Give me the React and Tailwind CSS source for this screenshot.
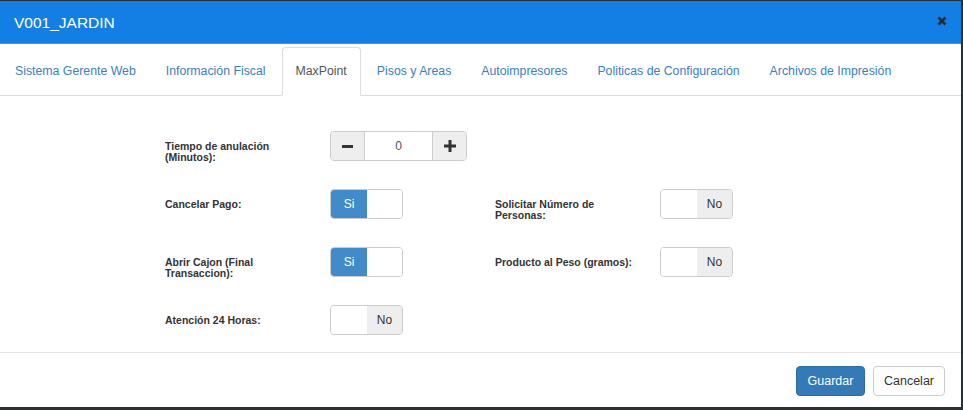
import React from 'react';

const tabs = [
    'Sistema Gerente Web',
    'Información Fiscal',
    'MaxPoint',
    'Pisos y Areas',
    'Autoimpresores',
    'Politicas de Configuración',
    'Archivos de Impresión',
];

const Toggle = ({ on }) => (
    <div className="w-[73px] h-[30px] rounded-[4px] border border-[#ccc] overflow-hidden flex text-[12px]">
        {on ? (
            <>
                <div className="w-[36px] bg-[#428bca] text-white flex items-center justify-center">Si</div>
                <div className="flex-1 bg-white" />
            </>
        ) : (
            <>
                <div className="w-[36px] bg-white" />
                <div className="flex-1 bg-[#eee] text-[#333] flex items-center justify-center">No</div>
            </>
        )}
    </div>
);

const Field = ({ label, children }) => (
    <div className="flex items-start">
        <div className="w-[165px] pt-[10px]">
            <p className="w-[140px] text-[10.5px] leading-[11px] font-bold text-[#333]">{label}</p>
        </div>
        {children}
    </div>
);

const Spinner = () => (
    <div className="w-[137px] h-[30px] rounded-[4px] border border-[#ccc] overflow-hidden flex">
        <div className="w-[34px] bg-[#eee] border-r border-[#ccc] flex items-center justify-center">
            <svg width="11" height="11" viewBox="0 0 11 11">
                <rect x="0" y="4" width="11" height="3" fill="#333" />
            </svg>
        </div>
        <div className="flex-1 bg-white flex items-center justify-center text-[12px] text-[#555]">0</div>
        <div className="w-[34px] bg-[#eee] border-l border-[#ccc] flex items-center justify-center">
            <svg width="12" height="12" viewBox="0 0 12 12">
                <rect x="0" y="4.5" width="12" height="3" fill="#333" />
                <rect x="4.5" y="0" width="3" height="12" fill="#333" />
            </svg>
        </div>
    </div>
);

const App = () => {
    return (
        <div className="w-[963px] h-[410px] bg-[#2b3035] pt-[1px] font-['Liberation_Sans',Arial,sans-serif]">
            <div className="w-[961px] h-[406px] bg-white flex flex-col overflow-hidden">
                {/* Header */}
                <div className="h-[43px] shrink-0 bg-[#137fe4] border-b border-[#3d93ea] flex items-center justify-between pl-[14px] pr-[14px]">
                    <h1 className="text-[15.5px] text-white pt-[2px]">V001_JARDIN</h1>
                    <svg width="10" height="10" viewBox="0 0 10 10" className="mt-[-3px]">
                        <path d="M1.5 1.5 L8.5 8.5 M8.5 1.5 L1.5 8.5" stroke="#1e2a36" strokeWidth="2.6" />
                    </svg>
                </div>

                {/* Tabs */}
                <ul className="shrink-0 flex pt-[3px] pl-[1px] border-b border-[#ddd] text-[12.3px]">
                    {tabs.map((t) => (
                        <li key={t} className="-mb-px mr-[2px]">
                            <span
                                className={
                                    t === 'MaxPoint'
                                        ? 'h-[49px] px-[13px] flex items-center border border-[#ddd] border-b-transparent bg-white rounded-t-[4px] text-[#555]'
                                        : 'h-[49px] px-[13px] flex items-center border border-transparent text-[#3b80c4]'
                                }
                            >
                                {t}
                            </span>
                        </li>
                    ))}
                </ul>

                {/* Body */}
                <div className="h-[256px] shrink-0 overflow-hidden pt-[35px] pl-[165px]">
                    <div className="grid grid-cols-[330px_330px] auto-rows-[58px]">
                        <Field label="Tiempo de anulación (Minutos):">
                            <Spinner />
                        </Field>
                        <div />
                        <Field label="Cancelar Pago:">
                            <Toggle on />
                        </Field>
                        <Field label="Solicitar Número de Personas:">
                            <Toggle />
                        </Field>
                        <Field label="Abrir Cajon (Final Transaccion):">
                            <Toggle on />
                        </Field>
                        <Field label="Producto al Peso (gramos):">
                            <Toggle />
                        </Field>
                        <Field label="Atención 24 Horas:">
                            <Toggle />
                        </Field>
                    </div>
                </div>

                {/* Footer */}
                <div className="h-[55px] shrink-0 border-t border-[#e5e5e5] flex justify-end items-start pt-[13px] pr-[16px] gap-[8px] text-[12.5px]">
                    <button className="w-[69px] h-[30px] rounded-[4px] bg-[#337ab7] border border-[#2e6da4] text-white">
                        Guardar
                    </button>
                    <button className="w-[72px] h-[30px] rounded-[4px] bg-white border border-[#ccc] text-[#333]">
                        Cancelar
                    </button>
                </div>
            </div>
        </div>
    );
};

export default App;
